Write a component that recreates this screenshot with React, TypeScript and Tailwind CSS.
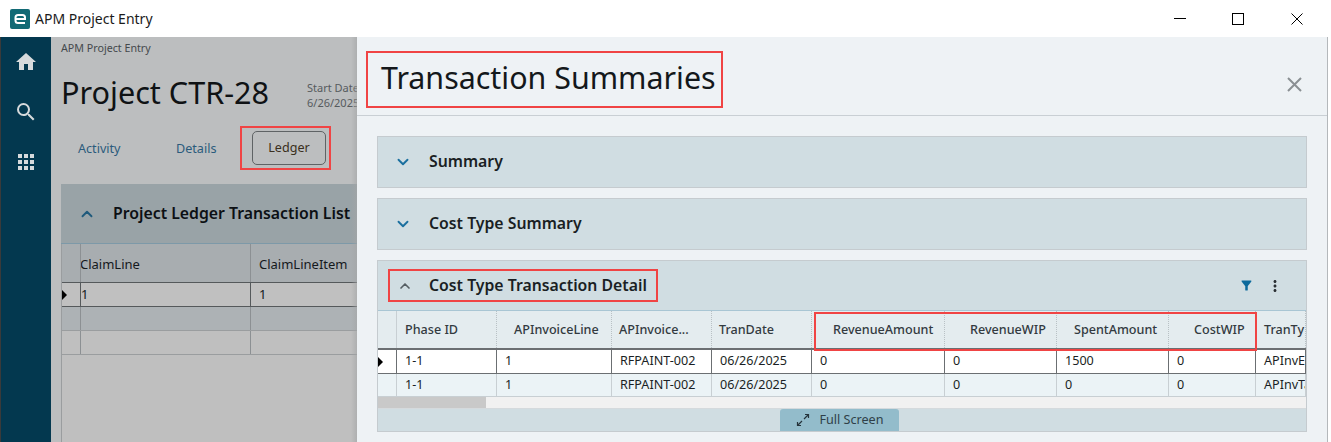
import { ChevronDown, ChevronUp } from 'lucide-react';
import { MdApps, MdFilterAlt, MdHome, MdMoreVert, MdSearch } from 'react-icons/md';

const font = "font-['Noto_Sans','Open_Sans',sans-serif]";

const columns = [
  { label: 'Phase ID', width: 'w-[100px]', header: 'pl-[8px]' },
  { label: 'APInvoiceLine', width: 'w-[115px]', header: 'pl-[17px]' },
  { label: 'APInvoice...', width: 'w-[100px]', header: 'pl-[7px]' },
  { label: 'TranDate', width: 'w-[100px]', header: 'pl-[7px]' },
  { label: 'RevenueAmount', width: 'w-[133px]', header: 'pl-[21px]' },
  { label: 'RevenueWIP', width: 'w-[112px]', header: 'pl-[25px]' },
  { label: 'SpentAmount', width: 'w-[112px]', header: 'pl-[17px]' },
  { label: 'CostWIP', width: 'w-[87px]', header: 'pl-[25px]' },
  { label: 'TranTy', width: 'w-[50px]', header: 'pl-[8px]' },
];

const detailRows = [
  ['1-1', '1', 'RFPAINT-002', '06/26/2025', '0', '0', '1500', '0', 'APInvEx'],
  ['1-1', '1', 'RFPAINT-002', '06/26/2025', '0', '0', '0', '0', 'APInvTa'],
];

function RowMarker() {
  return <span className="block w-0 h-0 border-y-[5px] border-y-transparent border-l-[5px] border-l-black" />;
}

function CollapsedPanel({ title }: { title: string }) {
  return (
    <div className="h-[52px] flex items-center bg-[#d0dde2] border border-[#c5cbcf]">
      <ChevronDown className="w-[18px] h-[18px] ml-[16px] text-[#1a6f9f]" strokeWidth={2.5} />
      <span className="ml-[17px] text-[15.8px] font-semibold text-[#1a1f24]">{title}</span>
    </div>
  );
}

function LeftPane() {
  return (
    <div className="w-[306px] shrink-0 bg-[#bcbebf] flex flex-col pl-[10px] relative overflow-hidden">
      <div className="text-[10.7px] text-[#44494c] h-[21px] pt-[3px]">APM Project Entry</div>
      <div className="flex h-[68px]">
        <h1 className="text-[30.6px] leading-[68px] text-[#0f1214] w-[246px] shrink-0 whitespace-nowrap">Project CTR-28</h1>
        <div className="text-[11px] leading-[15px] text-[#565b5e] pt-[22px] whitespace-nowrap">
          <div>Start Date</div>
          <div>6/26/2025</div>
        </div>
      </div>
      <div className="flex items-center h-[44px] text-[12.6px] text-[#2b5b7c]">
        <span className="ml-[17px] w-[98px] pt-[2px]">Activity</span>
        <span className="w-[76px] pt-[2px]">Details</span>
        <div className="w-[74px] h-[34px] flex items-center justify-center rounded-[5px] border border-[#5f6365] text-[#3a2f20]">Ledger</div>
      </div>
      <div className="mt-[14px] h-[60px] shrink-0 bg-[#99a3a7] border-b border-[#7d99a8] flex items-center -mr-[4px]">
        <ChevronUp className="w-[18px] h-[18px] ml-[17px] text-[#1f5a7c]" strokeWidth={2.5} />
        <span className="ml-[17px] pt-[1px] text-[15.8px] font-semibold text-[#0c1014] whitespace-nowrap">Project Ledger Transaction List</span>
      </div>
      <div className="text-[13px] text-[#15191c] border-l border-[#9a9d9f]">
        <div className="flex h-[39px] bg-[#a8adb0] border-b border-[#55595b]">
          <div className="w-[19px] border-r border-[#8c9093]" />
          <div className="w-[170px] pt-[3px] border-r border-[#8c9093] flex items-center overflow-hidden"><span className="-ml-[1px]">ClaimLine</span></div>
          <div className="flex-1 pt-[3px] flex items-center pl-[8px]">ClaimLineItem</div>
        </div>
        <div className="flex h-[24px] bg-[#c0c0c0] border-b border-[#55595b] items-center">
          <div className="w-[19px] h-full border-r border-[#55595b] flex items-center"><RowMarker /></div>
          <div className="w-[170px] h-full pt-[1px] border-r border-[#55595b] flex items-center">1</div>
          <div className="flex-1 pl-[8px] pt-[1px]">1</div>
        </div>
        <div className="flex h-[24px] bg-[#adb2b5] border-b border-[#9a9d9f]">
          <div className="w-[19px] border-r border-[#8c9093]" />
          <div className="w-[170px] border-r border-[#8c9093]" />
        </div>
        <div className="flex h-[24px] bg-[#bfbfbf] border-b border-[#9a9d9f]">
          <div className="w-[19px] border-r border-[#8c9093]" />
          <div className="w-[170px] border-r border-[#8c9093]" />
        </div>
      </div>
      <div className="flex-1 bg-[#bfbfbf] border-l border-[#9a9d9f]" />
      <div className="absolute top-0 bottom-0 right-0 w-[6px] bg-gradient-to-r from-transparent to-[#a3a5a6]/60" />
    </div>
  );
}

function DetailPanel() {
  return (
    <div className="mt-[10px] relative border border-[#c5cbcf] bg-[#d0dde2]">
      <div className="h-[50px] flex items-center border-b border-[#a9c6d4]">
        <div className="ml-[10px] w-[270px] h-[33px] flex items-center border-2 border-[#f04444]">
          <ChevronUp className="w-[16px] h-[16px] ml-[7px] text-[#555e63]" strokeWidth={2.5} />
          <span className="ml-[16px] text-[15.8px] font-semibold text-[#1a1f24] whitespace-nowrap">Cost Type Transaction Detail</span>
        </div>
        <MdFilterAlt className="ml-auto w-[15px] h-[15px] text-[#0d6a9c]" />
        <MdMoreVert className="ml-[12px] mr-[22px] w-[18px] h-[18px] text-[#2a2f33]" />
      </div>
      <div className="text-[12.6px] overflow-hidden">
        <div className="flex h-[39px] bg-[#e4ecef] border-b-2 border-[#6b6f72] text-[#333a3f] font-medium">
          <div className="w-[19px] shrink-0 border-r border-[#c8cfd3]" />
          {columns.map((c) => (
            <div key={c.label} className={`${c.width} ${c.header} pt-[2px] shrink-0 border-r border-dotted border-[#b9c1c5] flex items-center whitespace-nowrap overflow-hidden`}>
              {c.label}
            </div>
          ))}
        </div>
        {detailRows.map((row, i) => (
          <div key={i} className={i === 0 ? 'flex h-[24px] bg-white border-b border-[#6b6f72] text-[#1a1f24]' : 'flex h-[23px] bg-[#ebf3f6] border-b border-[#c8cfd3] text-[#1a1f24]'}>
            <div className={i === 0 ? 'w-[19px] shrink-0 border-r border-[#6b6f72] flex items-center' : 'w-[19px] shrink-0 border-r border-[#c8cfd3]'}>
              {i === 0 && <RowMarker />}
            </div>
            {row.map((v, j) => (
              <div key={j} className={`${columns[j].width} shrink-0 pl-[8px] flex items-center whitespace-nowrap overflow-hidden ${i === 0 ? 'border-r border-[#6b6f72]' : 'border-r border-[#c8cfd3]'}`}>
                {v}
              </div>
            ))}
          </div>
        ))}
      </div>
      <div className="h-[11px] bg-[#f1f1f1]">
        <div className="w-[108px] h-full bg-[#c9c9c9]" />
      </div>
      <div className="h-[23px] flex justify-center pr-[5px] border-t border-[#d5dadd]">
        <div className="w-[119px] h-full bg-[#93bccb] rounded-t-[3px] flex items-center justify-center gap-[10px] text-[12.6px] text-[#2f3f48]">
          <svg width="14" height="14" viewBox="0 0 14 14" fill="none" stroke="#26343c" strokeWidth="1.2">
            <path d="M8 6 12.5 1.5M9 1.5h3.5V5" />
            <path d="M6 8 1.5 12.5M5 12.5H1.5V9" />
          </svg>
          <span>Full Screen</span>
        </div>
      </div>
      {/* red call-out over the four amount columns */}
      <div className="absolute left-[436px] top-[51px] w-[443px] h-[39px] border-2 border-[#f04444] pointer-events-none" />
    </div>
  );
}

export default function App() {
  return (
    <div className={`${font} relative w-[1331px] h-[442px] overflow-hidden flex flex-col bg-white`}>
      <div className="h-[37px] shrink-0 flex items-center bg-white">
        <svg className="ml-[10px]" width="20" height="20" viewBox="0 0 20 20">
          <rect width="20" height="20" rx="2" fill="#126a75" />
          <path d="M6 10h9V8.500a2.500 2.500 0 0 0-2.500-2.500H8a2.500 2.500 0 0 0-2.500 2.500v3A2.500 2.500 0 0 0 8 14h7" fill="none" stroke="#fff" strokeWidth="2" />
        </svg>
        <span className="ml-[5px] text-[14px] text-[#1b1b1b]">APM Project Entry</span>
        <div className="ml-auto flex items-center mr-[28px]">
          <span className="block w-[12px] h-px bg-black" />
          <span className="block w-[12px] h-[12px] border border-black ml-[46px]" />
          <svg className="ml-[47px]" width="12" height="12" viewBox="0 0 12 12" stroke="#000" strokeWidth="1"><path d="M.5.5l11 11M11.500.5l-11 11" /></svg>
        </div>
      </div>
      <div className="flex-1 flex min-h-0 border-l border-[#3a3a3a] border-r-[3px] border-r-white">
        <div className="w-[50px] shrink-0 bg-[#03384f] flex flex-col items-center pt-[13px] gap-[26px] text-[#d6dadc]">
          <MdHome className="w-[24px] h-[24px]" />
          <MdSearch className="w-[24px] h-[24px]" />
          <MdApps className="w-[24px] h-[24px]" />
        </div>
        <LeftPane />
        <div className="flex-1 min-w-0 bg-[#eef2f5] border-r border-[#b4b8bb] flex flex-col">
          <div className="h-[79px] shrink-0 border-b border-[#c9cfd4] flex items-center">
            <div className="ml-[9px] mt-[7px] w-[357px] h-[57px] flex items-center border-2 border-[#f04444]">
              <span className="ml-[13px] mb-[3px] text-[30.4px] text-[#14181b] whitespace-nowrap">Transaction Summaries</span>
            </div>
            <svg className="ml-auto mr-[25px] mt-[16px]" width="15" height="15" viewBox="0 0 15 15" stroke="#8a8f93" strokeWidth="2"><path d="M1 1l13 13M14 1 1 14" /></svg>
          </div>
          <div className="pt-[20px] pl-[20px] pr-[20px] flex flex-col gap-[10px]">
            <CollapsedPanel title="Summary" />
            <CollapsedPanel title="Cost Type Summary" />
          </div>
          <div className="px-[20px]">
            <DetailPanel />
          </div>
        </div>
      </div>
      {/* red call-out around the Ledger tab */}
      <div className="absolute left-[240px] top-[126px] w-[91px] h-[44px] border-2 border-[#f04444] pointer-events-none" />
    </div>
  );
}
